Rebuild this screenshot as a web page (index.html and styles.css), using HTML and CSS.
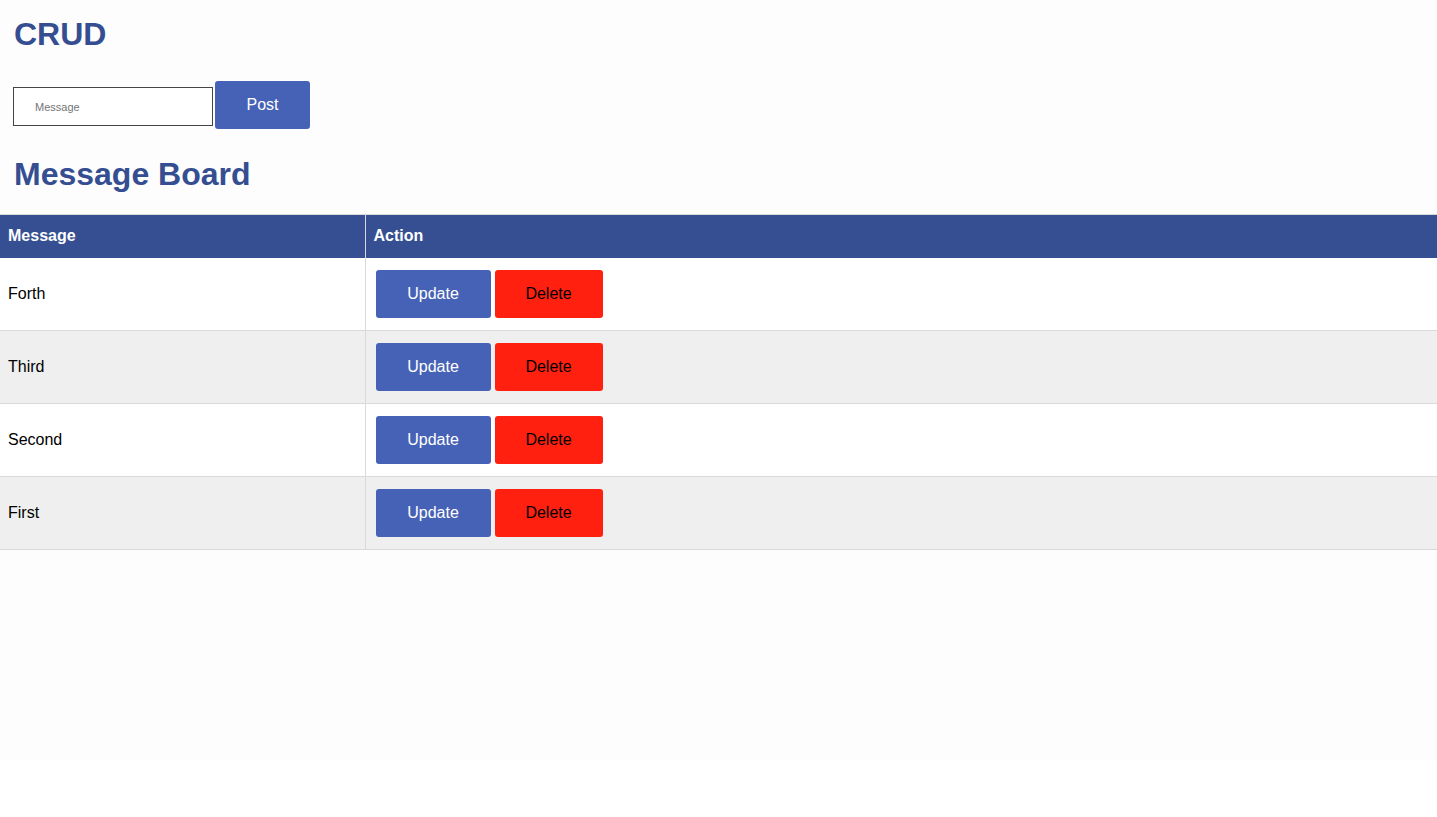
FILE: index.html
```html
<!DOCTYPE html>
<html>
<head>
<meta charset="utf-8">
<title>CRUD</title>
<link rel="stylesheet" href="styles.css">
</head>
<body>
<div class="page">
  <header class="top">
    <h1 class="title">CRUD</h1>
    <form class="post-form">
      <input class="msg-input" type="text" placeholder="Message">
      <button class="btn btn-post" type="button">Post</button>
    </form>
    <h1 class="title board-title">Message Board</h1>
  </header>
  <table class="board">
    <thead>
      <tr><th class="col-msg">Message</th><th>Action</th></tr>
    </thead>
    <tbody>
      <tr><td>Forth</td><td><div class="actions"><button class="btn btn-update">Update</button><button class="btn btn-delete">Delete</button></div></td></tr>
      <tr><td>Third</td><td><div class="actions"><button class="btn btn-update">Update</button><button class="btn btn-delete">Delete</button></div></td></tr>
      <tr><td>Second</td><td><div class="actions"><button class="btn btn-update">Update</button><button class="btn btn-delete">Delete</button></div></td></tr>
      <tr><td>First</td><td><div class="actions"><button class="btn btn-update">Update</button><button class="btn btn-delete">Delete</button></div></td></tr>
    </tbody>
  </table>
</div>
</body>
</html>
```
FILE: styles.css
```css
html, body {
  margin: 0;
  padding: 0;
  background: #ffffff;
}
body {
  font-family: "Liberation Sans", Arial, Helvetica, sans-serif;
  color: #000;
}
.page {
  min-height: 760px;
  background: #fdfdfd;
}
.top {
  padding: 16px 0 0 13px;
}
.title {
  margin: 0 0 0 1px;
  font-size: 32px;
  font-weight: 700;
  color: #354e91;
  line-height: 37px;
}
.post-form {
  display: flex;
  align-items: flex-start;
  gap: 2px;
  margin: 28px 0 0 0;
}
.msg-input {
  box-sizing: border-box;
  width: 200px;
  height: 39px;
  margin-top: 6px;
  border: 1px solid #444;
  border-radius: 0;
  padding: 0 0 0 21px;
  font-family: "Liberation Sans", Arial, sans-serif;
  font-size: 11px;
  background: #fff;
  outline: none;
}
.msg-input::placeholder {
  color: #757575;
}
.btn {
  box-sizing: border-box;
  height: 48px;
  border: none;
  border-radius: 3px;
  font-family: "Liberation Sans", Arial, sans-serif;
  font-size: 16px;
  cursor: pointer;
  padding: 0;
}
.btn-post {
  width: 95px;
  background: #4662b6;
  color: #fff;
}
.board-title {
  margin-top: 27px;
}
.board {
  width: 100%;
  margin-top: 21px;
  border-collapse: collapse;
  border-top: 1px solid #d9d9d9;
}
.board th {
  background: #364f92;
  color: #fff;
  font-weight: 700;
  font-size: 16px;
  text-align: left;
  padding: 12px 8px;
  height: 43px;
  box-sizing: border-box;
  border-left: 1px solid #d9d9d9;
}
.board th:first-child,
.board td:first-child {
  border-left: none;
}
.board .col-msg {
  width: 365px;
}
.board td {
  font-size: 16px;
  padding: 12px 8px;
  border-left: 1px solid #d9d9d9;
  border-bottom: 1px solid #d9d9d9;
  vertical-align: middle;
}
.board tbody tr:nth-child(odd) {
  background: #ffffff;
}
.board tbody tr:nth-child(even) {
  background: #efefef;
}
.actions {
  display: flex;
  gap: 4px;
  margin-left: 2px;
}
.btn-update {
  width: 115px;
  background: #4662b6;
  color: #fff;
}
.btn-delete {
  width: 108px;
  background: #ff2010;
  color: #000;
}
```
